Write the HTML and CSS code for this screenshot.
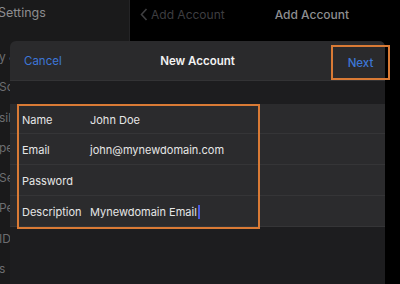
FILE: index.html
```html
<!DOCTYPE html>
<html lang="en">
<head>
    <meta charset="UTF-8">
    <title>New Account</title>
    <link rel="stylesheet" href="styles.css">
</head>
<body>
    <div class="screen">
        <div class="sidebar">
            <div class="side-title">Settings</div>
            <ul class="side-list">
                <li>y &amp;</li>
                <li>Sc</li>
                <li>sib</li>
                <li>pe</li>
                <li>Sea</li>
                <li>Pe</li>
                <li>ID</li>
                <li>s</li>
            </ul>
        </div>
        <div class="main">
            <div class="nav">
                <span class="back">
                    <svg width="8" height="13" viewBox="0 0 8 13"><path d="M6.5 1 L1.5 6.5 L6.5 12" fill="none" stroke="currentColor" stroke-width="1.6"/></svg>
                    Add Account
                </span>
                <span class="nav-title">Add Account</span>
            </div>
        </div>

        <div class="sheet">
            <div class="sheet-head">
                <span class="cancel">Cancel</span>
                <span class="sheet-title">New Account</span>
                <span class="next">Next</span>
            </div>
            <div class="form">
                <div class="row"><span class="label">Name</span><span class="value">John Doe</span></div>
                <div class="row"><span class="label">Email</span><span class="value">john@mynewdomain.com</span></div>
                <div class="row"><span class="label">Password</span><span class="value"></span></div>
                <div class="row"><span class="label">Description</span><span class="value">Mynewdomain Email<span class="caret"></span></span></div>
                <div class="highlight"></div>
            </div>
        </div>
    </div>
</body>
</html>
```

FILE: styles.css
```css
body {
    margin: 0;
    background: #000;
    font-family: Inter, "Noto Sans", sans-serif;
    overflow: hidden;
}

.screen {
    position: relative;
    width: 400px;
    height: 284px;
    display: grid;
    grid-template-columns: 130px 1fr;
    overflow: hidden;
}

.sidebar {
    background: #1a1a1b;
    border-right: 1px solid #242426;
    overflow: hidden;
}

.side-title {
    padding-top: 5px;
    margin-left: -2px;
    height: 37px;
    font-size: 12.5px;
    color: #8d8d8f;
}

.side-list {
    list-style: none;
    margin: 0;
    padding: 0;
}

.side-list li {
    height: 30.3px;
    line-height: 30.3px;
    font-size: 12px;
    color: #6d6d70;
    margin-left: -1px;
}

.main {
    background: #000;
}

.nav {
    height: 28px;
    display: flex;
    align-items: center;
    padding-left: 10px;
    font-size: 12px;
}

.back {
    display: flex;
    align-items: center;
    gap: 3px;
    color: #3e3e40;
}

.nav-title {
    margin-left: 50px;
    color: #8e8e90;
    font-weight: 500;
}

.sheet {
    position: absolute;
    left: 10px;
    top: 41px;
    width: 375px;
    bottom: 0;
    background: #1d1d1f;
    border-radius: 6px 6px 0 0;
}

.sheet-head {
    height: 39px;
    display: grid;
    grid-template-columns: 1fr auto 1fr;
    align-items: center;
    padding-left: 14px;
    background: #2a2a2c;
    border-bottom: 1px solid #333335;
    border-radius: 6px 6px 0 0;
    font-size: 11.5px;
}

.cancel {
    color: #3d76d6;
}

.sheet-title {
    color: #f2f2f2;
    font-weight: 600;
    padding-right: 14px;
}

.next {
    justify-self: end;
    width: 55px;
    height: 31px;
    margin-top: 4px;
    margin-right: -5px;
    border: 2px solid #d97a35;
    display: flex;
    align-items: center;
    justify-content: center;
    color: #3d76d6;
    font-weight: 500;
}

.form {
    position: relative;
    margin-top: 23px;
    background: #2b2b2d;
}

.row {
    height: 30px;
    padding-top: 2px;
    box-sizing: border-box;
    display: grid;
    grid-template-columns: 68px 1fr;
    align-items: center;
    padding-left: 12px;
    border-bottom: 1px solid #353537;
    font-size: 11px;
    color: #e6e6e6;
}

.row + .row {
    height: 31px;
}

.row:last-of-type {
    border-bottom: none;
}

.caret {
    display: inline-block;
    width: 2px;
    height: 14px;
    margin-left: 1px;
    vertical-align: -3px;
    background: #4a5be0;
}

.highlight {
    position: absolute;
    left: 7px;
    top: 0;
    width: 239px;
    height: 121px;
    border: 2px solid #d97a35;
}
```
